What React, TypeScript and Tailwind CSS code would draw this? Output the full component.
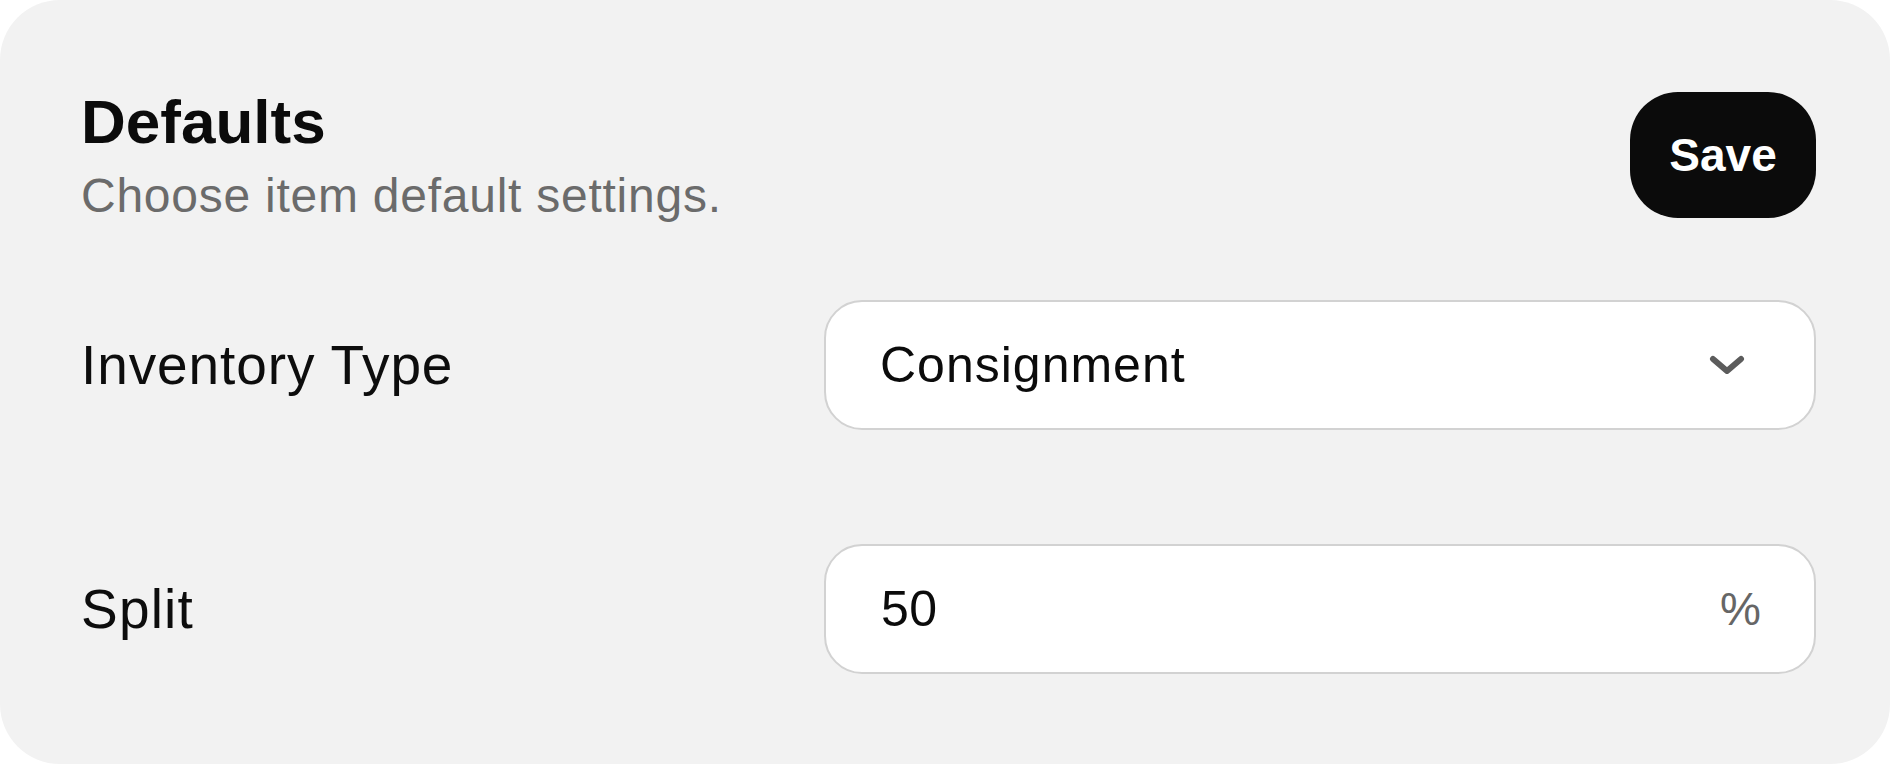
import React from "react";

function Chevron() {
  return (
    <svg width="36" height="20" viewBox="0 0 36 20" fill="none" aria-hidden="true">
      <path d="M4 4 L18 16 L32 4" stroke="#5c5c5c" strokeWidth="6" strokeLinecap="round" strokeLinejoin="round" />
    </svg>
  );
}

export default function App() {
  const font = { fontFamily: '"Liberation Sans", Arial, sans-serif' };
  return (
    <div className="w-full h-[764px] bg-white" style={font}>
      <div className="h-full w-full rounded-[60px] bg-[#f2f2f2] pl-[81px] pr-[74px] pt-[86px]">
        <div className="flex items-center justify-between">
          <div className="flex flex-col">
            <h1 className="text-[62px] leading-[72px] font-bold tracking-[0px] text-[#0b0b0b]">Defaults</h1>
            <p className="mt-[10px] text-[48px] leading-[56px] tracking-[0.75px] text-[#6b6b6b]">Choose item default settings.</p>
          </div>
          <button className="w-[186px] h-[126px] rounded-[48px] bg-[#0b0b0b] text-white text-[46px] font-bold leading-none flex items-center justify-center">
            Save
          </button>
        </div>

        <div className="mt-[76px] flex flex-col gap-[114px]">
          <div className="grid grid-cols-[743px_1fr] items-center">
            <span className="text-[55px] leading-[64px] tracking-[0.9px] text-[#0d0d0d]">Inventory Type</span>
            <div className="h-[130px] rounded-[38px] border-2 border-[#d2d2d2] bg-white flex items-center justify-between pl-[54px] pr-[69px]">
              <span className="text-[50px] leading-[60px] tracking-[1px] text-[#0b0b0b]">Consignment</span>
              <Chevron />
            </div>
          </div>
          <div className="grid grid-cols-[743px_1fr] items-center">
            <span className="text-[55px] leading-[64px] tracking-[1.2px] text-[#0d0d0d]">Split</span>
            <div className="h-[130px] rounded-[38px] border-2 border-[#d2d2d2] bg-white flex items-center justify-between pl-[55px] pr-[53px]">
              <span className="text-[50px] leading-[60px] tracking-[0.5px] text-[#0b0b0b]">50</span>
              <span className="text-[46px] leading-[60px] text-[#666666]">%</span>
            </div>
          </div>
        </div>
      </div>
    </div>
  );
}
